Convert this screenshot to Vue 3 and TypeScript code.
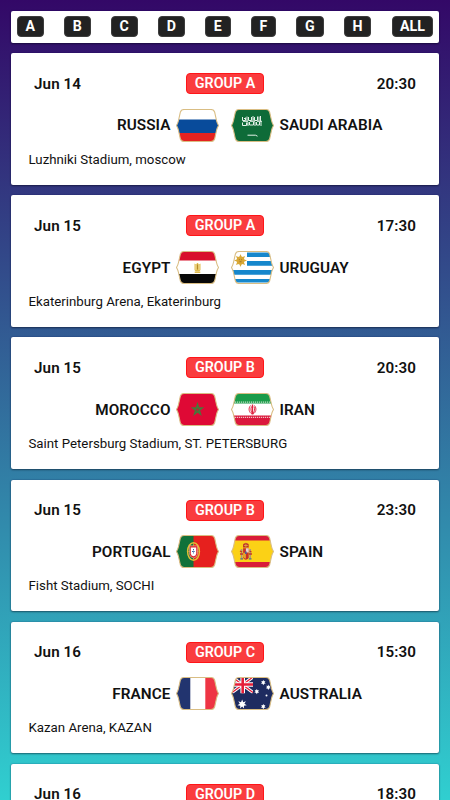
<script setup lang="ts">
interface Match {
  date: string
  time: string
  group: string
  home: string
  away: string
  venue: string
}

const filters: string[] = ['A', 'B', 'C', 'D', 'E', 'F', 'G', 'H', 'ALL']

const matches: Match[] = [
  { date: 'Jun 14', time: '20:30', group: 'A', home: 'RUSSIA', away: 'SAUDI ARABIA', venue: 'Luzhniki Stadium, moscow' },
  { date: 'Jun 15', time: '17:30', group: 'A', home: 'EGYPT', away: 'URUGUAY', venue: 'Ekaterinburg Arena, Ekaterinburg' },
  { date: 'Jun 15', time: '20:30', group: 'B', home: 'MOROCCO', away: 'IRAN', venue: 'Saint Petersburg Stadium, ST. PETERSBURG' },
  { date: 'Jun 15', time: '23:30', group: 'B', home: 'PORTUGAL', away: 'SPAIN', venue: 'Fisht Stadium, SOCHI' },
  { date: 'Jun 16', time: '15:30', group: 'C', home: 'FRANCE', away: 'AUSTRALIA', venue: 'Kazan Arena, KAZAN' },
  { date: 'Jun 16', time: '18:30', group: 'D', home: '', away: '', venue: '' },
]

const outline =
  'M8 .5H35Q37.800 .5 38.600 3L40.500 11.500Q41 14 42.500 16.500Q41 19 40.500 21.500L38.600 30Q37.800 32.500 35 32.500H8Q5.200 32.500 4.400 30L2.500 21.500Q2 19 .5 16.500Q2 14 2.500 11.500L4.400 3Q5.200 .5 8 .5Z'

const rays: number[] = [0, 45, 90, 135, 180, 225, 270, 315]
</script>

<template>
  <main class="page">
    <svg class="defs" aria-hidden="true">
      <defs>
        <clipPath id="badge"><path :d="outline" /></clipPath>
      </defs>
    </svg>

    <nav class="filters">
      <button v-for="f in filters" :key="f" type="button" class="filter">{{ f }}</button>
    </nav>

    <article v-for="(m, i) in matches" :key="i" class="card">
      <header class="head">
        <span class="date">{{ m.date }}</span>
        <span class="group">GROUP {{ m.group }}</span>
        <span class="time">{{ m.time }}</span>
      </header>
      <div v-if="m.home" class="teams">
        <span class="home">{{ m.home }}</span>
        <svg v-for="team in [m.home, m.away]" :key="team" class="flag" viewBox="0 0 43 33">
          <g clip-path="url(#badge)">
            <template v-if="team === 'RUSSIA'">
              <path fill="#fff" d="M0 0h43v11H0z" />
              <path fill="#084b9b" d="M0 10.500h43v13.500H0z" />
              <path fill="#e52220" d="M0 24h43v9H0z" />
            </template>
            <template v-else-if="team === 'SAUDI ARABIA'">
              <path fill="#0e6b38" d="M0 0h43v33H0z" />
              <g fill="none" stroke="#e4f1e8" stroke-width="1">
                <path d="M11.500 8v3.500h3V8.500m1.500-1v5m1.500-4.500v3.500h3V8m1.500-1v5m1.500-4v3.500h3V7.500m1.500 0v4.500m1.500-5v5.500" />
                <path d="M11.500 13.500v3h4v-3m1.500 3.500v-4m1.500 0v3h4v-3m1.500 4v-4m1.500 0v3h3v-3m1.500-1v5M12 12.300h5m2 0h5m2 0h5M13 9.500h2m7 .5h2m-9 5h2" />
                <path d="M16.500 26.200h8l2 1" />
              </g>
            </template>
            <template v-else-if="team === 'EGYPT'">
              <path fill="#fff" d="M0 0h43v33H0z" />
              <path fill="#d8102b" d="M0 0h43v9.500H0z" />
              <path fill="#080808" d="M0 23h43v10H0z" />
              <g fill="#e1bd50">
                <path d="M18.500 12.500l1.700 1.200.8-1.700h1l.8 1.700 1.700-1.200v6.500l-1.200 1.500h-3.600L18.500 19z" />
                <path d="M18.700 20.500h5.600v1.500h-5.600z" />
              </g>
              <path d="M20 14v5m3-5v5" stroke="#fff3c9" stroke-width=".7" />
              <path d="M21.500 13.500v5" stroke="#b38b28" stroke-width="1.200" />
            </template>
            <template v-else-if="team === 'URUGUAY'">
              <path fill="#fff" d="M0 0h43v33H0z" />
              <path fill="#1687cc" d="M16 1.500h27v4.500H16zm0 8.500h27v4.700H16zM0 19h43v4.700H0zm0 9h43v3.500H0z" />
              <g transform="translate(9.500 9.500)">
                <path v-for="r in rays" :key="r" d="M-1.600-2.500L0-6.500L1.600-2.500Z" fill="#d8aa35" :transform="`rotate(${r})`" />
                <circle r="3.900" fill="#d9a735" />
                <path d="M-1.600-.8h1m1.200 0h1M-1 1.200h2" stroke="#936d2b" stroke-width=".8" />
              </g>
            </template>
            <template v-else-if="team === 'MOROCCO'">
              <path fill="#df0935" d="M0 0h43v33H0z" />
              <path fill="none" stroke="#48783a" stroke-width="1.400" d="M21.500 11.200L24.500 21L16.800 15H26.200L18.500 21Z" />
            </template>
            <template v-else-if="team === 'IRAN'">
              <path fill="#fff" d="M0 0h43v33H0z" />
              <path fill="#1a9c4a" d="M0 0h43v10.500H0z" />
              <path fill="#db183c" d="M0 22.500h43V33H0z" />
              <path d="M0 9.100h43M0 24.300h43" stroke="#f6f8ef" stroke-opacity=".75" stroke-width="1.200" stroke-dasharray="1.200 .8" />
              <g fill="none" stroke="#de2440">
                <path stroke-width="1.300" d="M21.500 11.500v10" />
                <path stroke-width=".95" d="M19.500 12.500c-2.500 3-1.500 7 1.500 8.500m2.500-8.500c2.500 3 1.500 7-1.500 8.500m-1.500-7.500c-1 2.500-.7 5 1 7m1.500-7c1 2.500.7 5-1 7" />
              </g>
            </template>
            <template v-else-if="team === 'PORTUGAL'">
              <path fill="#e6201e" d="M0 0h43v33H0z" />
              <path fill="#11713a" d="M0 0h17.500v33H0z" />
              <ellipse cx="17.500" cy="16.500" rx="5.900" ry="8.800" fill="none" stroke="#e1bc35" stroke-width="1.500" />
              <path d="M12 16.500h11M17.500 8v17M14 10.500q7 5 7 12" fill="none" stroke="#c6a636" stroke-width=".8" />
              <path d="M13.500 10.800h8v8.500q-.5 3.200-4 3.700q-3.500-.5-4-3.700z" fill="#db2930" stroke="#f2c8b5" stroke-width=".5" />
              <path d="M14.800 12.500h5.400v6.200q-.3 2.300-2.700 2.600q-2.400-.3-2.700-2.600z" fill="#fff" />
              <path d="M17.500 14v5m-1.500-2.500h3" stroke="#2a559a" stroke-width=".9" stroke-dasharray="1 .7" />
            </template>
            <template v-else-if="team === 'SPAIN'">
              <path fill="#fbd116" d="M0 0h43v33H0z" />
              <path fill="#d91c38" d="M0 0h43v5.500H0zM0 27h43v6H0z" />
              <path d="M10.600 14v9m8.600-9v9" stroke="#a9967e" stroke-width="1.500" />
              <path d="M9.300 23.800h2.700m5.800 0h2.700" stroke="#43689b" stroke-width="1.300" />
              <path d="M9 19h3m6 0h3M9 16l2 1m7.500-1l2 1" stroke="#c5362b" stroke-width="1.300" />
              <path fill="#bd332c" d="M12 12.500l.2-3.500 2.700-1.200L17.600 9l.2 3.500z" />
              <path d="M13 10.500h3.800M14.900 8.500V12" stroke="#e8bd45" stroke-width=".7" />
              <path fill="#c52f2c" d="M12.100 13.200h5.600v9.300q-.5 2-2.800 2.300q-2.300-.3-2.800-2.300z" />
              <path fill="#e8d6cc" d="M14.900 13.200h2.800v4.300h-2.800z" />
              <path fill="#e4a52a" d="M12.100 17.800h2.800v6q-2.300-.3-2.800-2z" />
              <path fill="#536091" d="M14 16.500h1.700v2.600H14z" />
            </template>
            <template v-else-if="team === 'FRANCE'">
              <path fill="#fff" d="M0 0h43v33H0z" />
              <path fill="#22346f" d="M0 0h14.300v33H0z" />
              <path fill="#ee3544" d="M29.300 0H43v33H29.300z" />
            </template>
            <template v-else-if="team === 'AUSTRALIA'">
              <path fill="#1e2b60" d="M0 0h43v33H0z" />
              <svg width="22" height="16.500" viewBox="0 0 22 16.500">
                <path d="M1 0L22 15.500M22 0L1 15.500" stroke="#fff" stroke-width="3.300" />
                <path d="M1 0L22 15.500M22 0L1 15.500" stroke="#e51d38" stroke-width="1.300" />
                <path d="M11.700 0v16.500M0 7.500h22" stroke="#fff" stroke-width="4.600" />
                <path d="M11.700 0v16.500M0 7.500h22" stroke="#e51d38" stroke-width="2.600" />
              </svg>
              <g fill="#fff">
                <path d="M11.200 22.500l1 2.800 2.700-1.100-1.500 2.500 2.400 1.500-2.900.5.200 2.900-2-2-2 2 .2-2.900-2.900-.5 2.400-1.500-1.500-2.500 2.700 1.100z" />
                <path id="star" d="M32.300 2.800l.6 1.500 1.600-.4-1 1.400 1.200 1.100-1.600.3-.8 1.500-.8-1.500-1.600-.3 1.200-1.100-1-1.400 1.600.4z" />
                <use href="#star" x="-6.500" y="9" />
                <use href="#star" x="5" y="4.800" />
                <use href="#star" x="0" y="24" />
                <circle cx="35.500" cy="18.500" r="1" />
              </g>
            </template>
          </g>
          <path :d="outline" fill="none" stroke="#d9bd83" stroke-width="1.100" />
        </svg>
        <span class="away">{{ m.away }}</span>
      </div>
      <p v-if="m.venue" class="venue">{{ m.venue }}</p>
    </article>
  </main>
</template>

<style>
body {
  margin: 0;
  overflow: hidden;
}
</style>

<style scoped>
.page {
  box-sizing: border-box;
  height: 800px;
  overflow: hidden;
  padding: 11px 11px 0;
  background: linear-gradient(to top, #30cfd0 0%, #330867 100%);
  font-family: Roboto, 'Liberation Sans', sans-serif;
  color: #111;
}

.defs {
  display: block;
  width: 0;
  height: 0;
}

.filters,
.card {
  box-sizing: border-box;
  background: #fff;
  border-radius: 2px;
  box-shadow: 0 1px 2px rgba(0, 0, 0, 0.4), 0 0 1.500px rgba(0, 0, 90, 0.5);
}

.filters {
  display: flex;
  justify-content: space-between;
  align-items: center;
  height: 31.700px;
  padding: 0 5.500px;
}

.filter {
  box-sizing: border-box;
  height: 21px;
  padding: 0 7.900px;
  border: 1px solid #3c3c3c;
  border-radius: 4px;
  background: #222;
  color: #fff;
  font: 700 14.200px/19px Roboto, 'Liberation Sans', sans-serif;
}

.filter:last-child {
  padding: 0 7.500px;
}

.card {
  height: 131.500px;
  margin-top: 10.600px;
  padding-top: 20px;
}

.head {
  display: grid;
  grid-template-columns: 1fr auto 1fr;
  align-items: center;
  height: 21px;
  padding: 0 23px;
  font-size: 15.200px;
  font-weight: 600;
  letter-spacing: 0.1px;
}

.group {
  box-sizing: border-box;
  height: 21px;
  padding: 0 7.800px;
  border: 1px solid #ff1518;
  border-radius: 4px;
  background: #fa3c3e;
  color: #fff;
  font-size: 14.300px;
  letter-spacing: 0;
  line-height: 19px;
}

.time {
  text-align: right;
}

.teams {
  display: flex;
  align-items: center;
  height: 33px;
  margin-top: 14.700px;
  font-size: 15.300px;
  font-weight: 600;
  letter-spacing: 0.07px;
  line-height: 18px;
}

.home {
  width: 159.500px;
  margin-right: 5.500px;
  text-align: right;
}

.flag {
  display: block;
  flex: none;
  width: 43px;
  height: 33px;
}

.flag + .flag {
  margin-left: 11.500px;
}

.away {
  margin-left: 6px;
}

.venue {
  margin: 8.600px 0 0 17.500px;
  font-size: 13.250px;
  line-height: 17px;
}
</style>
